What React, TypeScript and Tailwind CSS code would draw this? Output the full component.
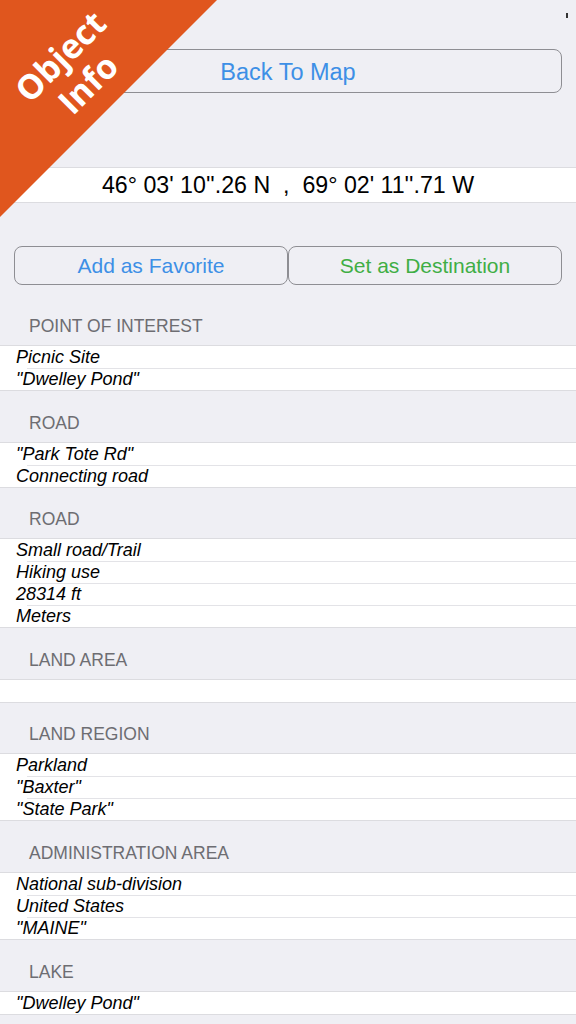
import React from 'react';

interface Section {
  title: string;
  rows: string[];
  first?: boolean;
}

const sections: Section[] = [
  { title: 'POINT OF INTEREST', rows: ['Picnic Site', '"Dwelley Pond"'], first: true },
  { title: 'ROAD', rows: ['"Park Tote Rd"', 'Connecting road'] },
  { title: 'ROAD', rows: ['Small road/Trail', 'Hiking use', '28314 ft', 'Meters'] },
  { title: 'LAND AREA', rows: [''] },
  { title: 'LAND REGION', rows: ['Parkland', '"Baxter"', '"State Park"'] },
  { title: 'ADMINISTRATION AREA', rows: ['National sub-division', 'United States', '"MAINE"'] },
  { title: 'LAKE', rows: ['"Dwelley Pond"'] },
];

function SectionBlock({ section }: { section: Section }) {
  return (
    <div>
      <div
        className={`flex items-end h-[50.6px] pb-[9px] pl-[29px] text-[17.5px] leading-[20px] text-[#6d6d72] ${
          section.first ? 'mt-[9.5px]' : ''
        }`}
      >
        {section.title}
      </div>
      <div className="bg-white border-y border-[#dcdce0]">
        {section.rows.map((row, i) => (
          <div key={i} className="relative h-[22px]">
            {i > 0 && <div className="absolute top-0 left-[27px] right-0 h-px bg-[#e3e3e7]" />}
            <div className="pl-[16px] pt-[1px] text-[18px] leading-[21px] italic text-black">{row}</div>
          </div>
        ))}
      </div>
    </div>
  );
}

export default function App() {
  return (
    <div
      className="relative w-[576px] h-[1024px] overflow-hidden bg-[#efeff4]"
      style={{ fontFamily: '"Liberation Sans", Arial, sans-serif' }}
    >
      {/* status mark */}
      <div className="absolute top-[13px] right-[8px] w-[2px] h-[5px] bg-[#333]" />

      <div className="h-[49px]" />
      <div className="mx-[14px] h-[44px] pt-[3px] flex items-center justify-center border border-[#8e8e93] rounded-[8px] text-[23.5px] text-[#3d8fe6]">
        Back To Map
      </div>

      <div className="h-[74px]" />
      <div className="h-[36px] pt-[1px] flex items-center justify-center bg-white border-y border-[#dcdce0] text-[23.2px] text-black">
        46° 03' 10''.26 N&nbsp;&nbsp;,&nbsp;&nbsp;69° 02' 11''.71 W
      </div>

      <div className="h-[43px]" />
      <div className="flex mx-[14px] h-[39px]">
        <div className="flex-1 flex items-center justify-center border border-[#8e8e93] rounded-[8px] text-[21px] text-[#3d8fe6]">
          Add as Favorite
        </div>
        <div className="flex-1 flex items-center justify-center border border-[#8e8e93] rounded-[8px] text-[21px] text-[#3fae45]">
          Set as Destination
        </div>
      </div>

      {sections.map((s, i) => (
        <SectionBlock key={i} section={s} />
      ))}

      {/* corner ribbon */}
      <div
        className="absolute top-0 left-0 w-[217px] h-[217px] bg-[#e0561e]"
        style={{ clipPath: 'polygon(0 0, 100% 0, 0 100%)' }}
      >
        <div className="absolute left-[74px] top-[70px] w-0 h-0">
          <div
            className="absolute -translate-x-1/2 -translate-y-1/2 -rotate-45 text-center text-white font-bold text-[34px] leading-[39px] whitespace-nowrap"
            style={{ fontFamily: '"Open Sans", "Liberation Sans", sans-serif' }}
          >
            Object
            <br />
            Info
          </div>
        </div>
      </div>
    </div>
  );
}
